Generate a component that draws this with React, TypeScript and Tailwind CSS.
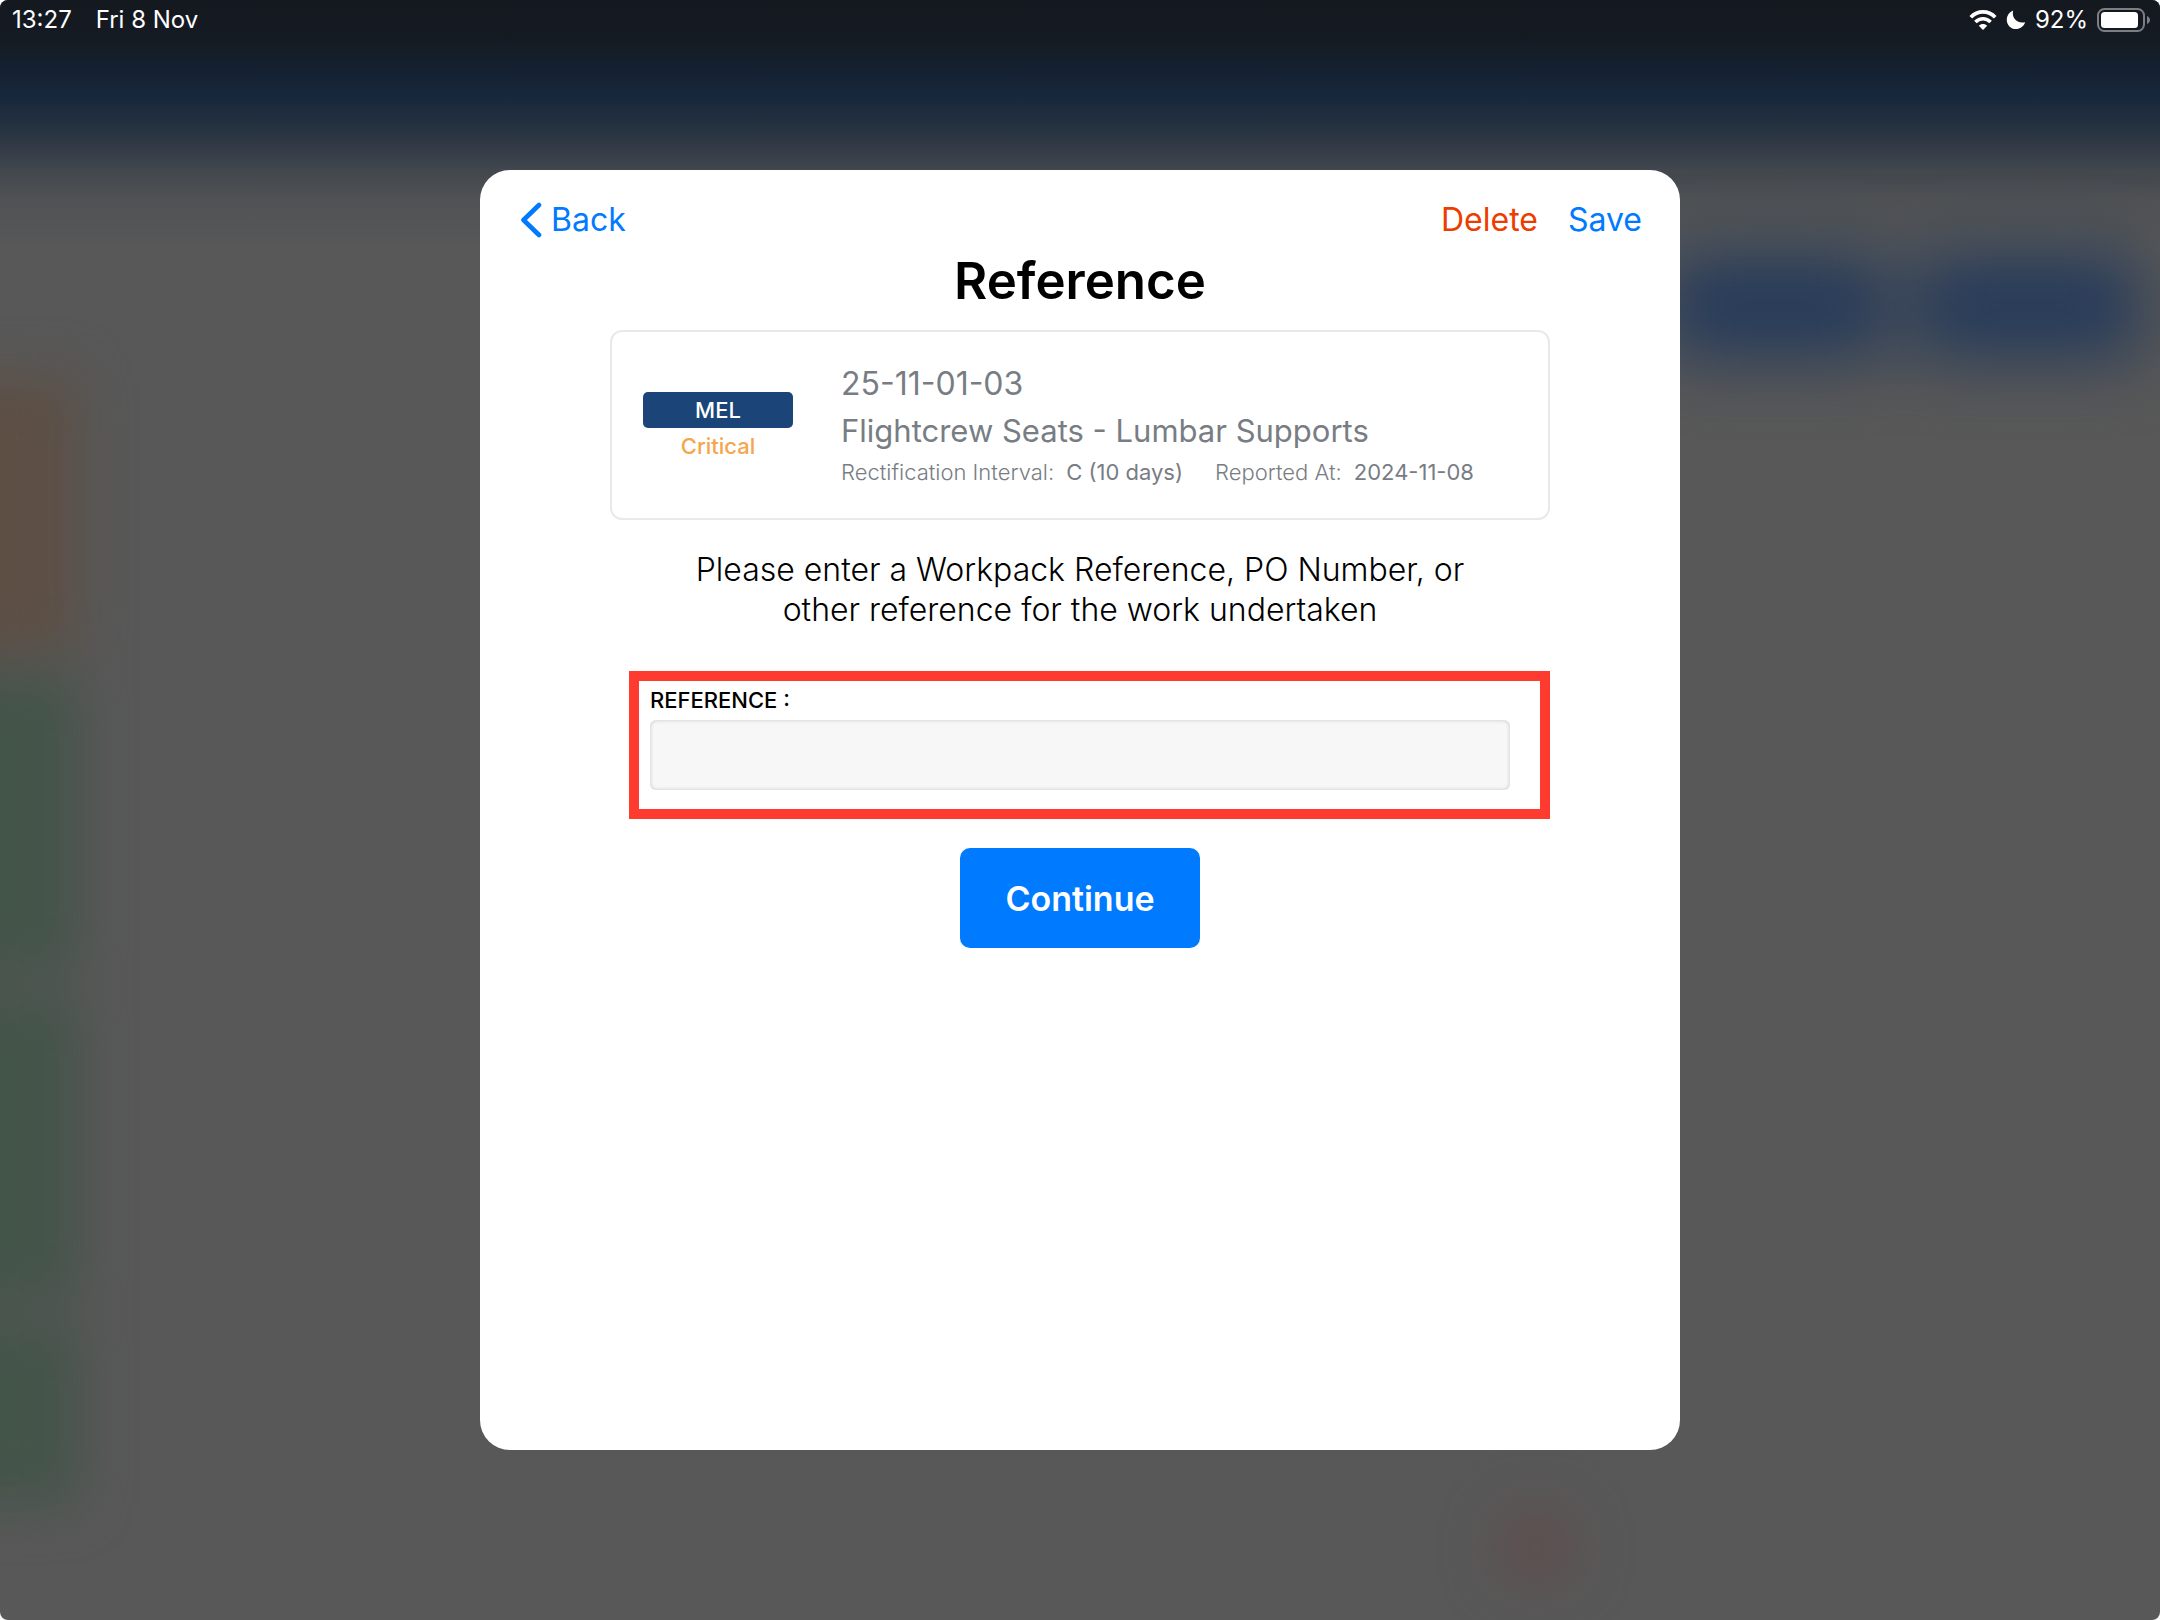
import { useState } from 'react';

function WifiIcon() {
  return (
    <svg className="h-5 w-7" viewBox="0 0 28 20" fill="none" aria-hidden="true">
      <path d="M1.8 7.2C8.6 .2 19.4 .2 26.2 7.2" stroke="white" strokeWidth="3.8" />
      <path d="M6.4 12C10.7 7.6 17.3 7.6 21.6 12" stroke="white" strokeWidth="3.6" />
      <path d="M14 19.9L9.8 15.7C12.2 13.4 15.8 13.4 18.2 15.7Z" fill="white" />
    </svg>
  );
}

function MoonIcon() {
  return (
    <svg className="h-5 w-5" viewBox="0 0 20 20" aria-hidden="true">
      <path d="M7.2.6C5.2 7.6 11 14.3 19.2 12.2C17.6 16.5 14 19 9.9 19C4.8 19 .8 15 .8 9.9C.8 5.7 3.4 2 7.2.6Z" fill="white" />
    </svg>
  );
}

function BatteryIcon() {
  return (
    <svg className="h-6 w-[53px]" viewBox="0 0 53 24" fill="none" aria-hidden="true">
      <rect x="1" y="1" width="46" height="22" rx="6.5" stroke="#7b7e83" strokeWidth="2" />
      <rect x="4" y="4" width="37" height="16" rx="3.5" fill="white" />
      <path d="M50 8C52 8.8 53 10.3 53 12C53 13.7 52 15.2 50 16Z" fill="#7b7e83" />
    </svg>
  );
}

function StatusBar() {
  return (
    <header className="relative flex h-10 items-center justify-between pl-3 pr-[10px] text-2xl text-white">
      <div className="flex gap-6">
        <span>13:27</span>
        <span>Fri 8 Nov</span>
      </div>
      <div className="flex items-center gap-[9px]">
        <WifiIcon />
        <MoonIcon />
        <span>92%</span>
        <BatteryIcon />
      </div>
    </header>
  );
}

// Dimmed, blurred screen that sits underneath the dialog
function Backdrop() {
  return (
    <div className="absolute inset-0 overflow-hidden rounded-lg bg-[#585858]" aria-hidden="true">
      <div className="h-[250px] bg-linear-[180deg,#14181f_0px,#151b23_40px,#14202f_66px,#17273b_96px,#23303f_124px,#343c47_150px,#42474e_170px,#505254_200px,#585858_250px]" />
      <div className="mt-1 flex justify-end gap-7 pr-5 blur-[34px]">
        <div className="h-[104px] w-[224px] rounded-lg bg-[#253a5a]" />
        <div className="h-[104px] w-[224px] rounded-lg bg-[#253a5a]" />
      </div>
      <div className="-ml-20 mt-5 flex w-[156px] flex-col gap-6 blur-[26px]">
        <div className="h-[274px] bg-[#5d4f44]" />
        <div className="h-[296px] bg-[#435449]" />
        <div className="h-[304px] bg-[#435449]" />
        <div className="h-[180px] bg-[#435449]" />
      </div>
      <div className="ml-[1500px] mt-2 h-[70px] w-[72px] rounded-full bg-[#604c4b] blur-[28px]" />
    </div>
  );
}

function DefectCard() {
  return (
    <section className="mx-[130px] flex h-[190px] items-center gap-12 rounded-xl border-2 border-[#e9e9e9] px-[31px] text-[#787d84]">
      <div className="flex w-[150px] flex-col pt-1.5 text-center text-[22px] font-medium leading-9">
        <span className="rounded-[5px] bg-[#1b4479] text-white">MEL</span>
        <span className="text-[#f5a54b]">Critical</span>
      </div>
      <div>
        <p className="text-[32px] leading-[47px]">25-11-01-03</p>
        <p className="text-[31px] leading-[47px]">Flightcrew Seats - Lumbar Supports</p>
        <dl className="flex gap-8 text-[22px] leading-9">
          <div className="flex gap-3">
            <dt className="font-light">Rectification Interval:</dt>
            <dd>C (10 days)</dd>
          </div>
          <div className="flex gap-3">
            <dt className="font-light">Reported At:</dt>
            <dd>2024-11-08</dd>
          </div>
        </dl>
      </div>
    </section>
  );
}

export default function App() {
  const [reference, setReference] = useState('');

  return (
    <div className="relative min-h-screen bg-white font-['Inter','Liberation_Sans',sans-serif]">
      <Backdrop />
      <StatusBar />
      <main
        role="dialog"
        aria-labelledby="dialog-title"
        className="relative mx-auto mt-[130px] min-h-[1280px] max-w-[1200px] rounded-[30px] bg-white pt-[25px] text-black"
      >
        <div className="flex items-center justify-between pl-10 pr-[38px] text-[32px] leading-[50px] text-[#007aff]">
          <button type="button" className="flex items-center gap-[9px]">
            <svg className="h-9 w-[22px]" viewBox="0 0 22 36" fill="none" aria-hidden="true">
              <path d="M19 3L3.5 18L19 33" stroke="currentColor" strokeWidth="4.6" strokeLinecap="round" strokeLinejoin="round" />
            </svg>
            Back
          </button>
          <div className="flex gap-[30px]">
            <button type="button" className="text-[#eb3d00]">Delete</button>
            <button type="button">Save</button>
          </div>
        </div>

        <h1 id="dialog-title" className="mb-[13px] text-center text-[51px] font-semibold leading-[72px]">
          Reference
        </h1>

        <DefectCard />

        <p className="mx-auto mt-[30px] max-w-[800px] text-center text-[32px] font-light leading-10">
          Please enter a Workpack Reference, PO Number, or other reference for the work undertaken
        </p>

        <form onSubmit={(e) => e.preventDefault()}>
          <div className="ml-[149px] mr-[130px] mt-[41px] flex h-[148px] flex-col border-[10px] border-[#ff3b30] pl-[11px] pr-[30px] pt-1">
            <label htmlFor="reference" className="text-[22px] font-medium leading-[30px]">
              REFERENCE :
            </label>
            <input
              id="reference"
              type="text"
              value={reference}
              onChange={(e) => setReference(e.target.value)}
              className="mt-[5px] h-[70px] w-full rounded-md bg-[#f7f7f7] px-4 text-[32px] shadow-[inset_0_0_4px_rgba(0,0,0,0.2)] outline-none"
            />
          </div>
          <button
            type="submit"
            className="mx-auto mt-[29px] block h-[100px] w-[240px] rounded-[10px] bg-[#007aff] text-[34px] font-semibold text-white"
          >
            Continue
          </button>
        </form>
      </main>
    </div>
  );
}
